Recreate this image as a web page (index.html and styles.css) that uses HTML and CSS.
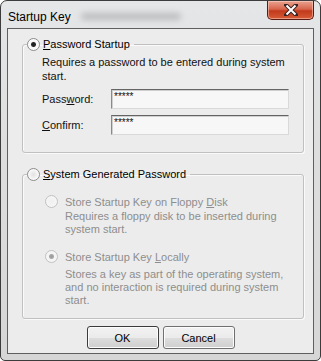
FILE: index.html
```html
<!DOCTYPE html>
<html lang="en">
<head>
    <meta charset="UTF-8">
    <title>Startup Key</title>
    <link rel="stylesheet" href="styles.css">
</head>
<body>
    <div class="window">
        <div class="titlebar">
            <span class="title">Startup Key</span>
            <span class="glass-blur"></span>
            <button class="close-btn" aria-label="Close">
                <svg width="14" height="12" viewBox="0 0 14 12">
                    <path d="M2 1 L12 11 M12 1 L2 11" stroke="#3b2222" stroke-width="4" stroke-linecap="square"/>
                    <path d="M2.5 1.5 L11.5 10.5 M11.5 1.5 L2.5 10.5" stroke="#fff" stroke-width="2"/>
                </svg>
            </button>
        </div>

        <div class="client">
            <fieldset class="group">
                <legend class="group-legend">
                    <span class="radio checked"></span>
                    <span><u>P</u>assword Startup</span>
                </legend>
                <p class="desc first">Requires a password to be entered during system start.</p>
                <div class="field-row">
                    <label class="field-label">Pass<u>w</u>ord:</label>
                    <div class="textbox">*****</div>
                </div>
                <div class="field-row">
                    <label class="field-label"><u>C</u>onfirm:</label>
                    <div class="textbox">*****</div>
                </div>
            </fieldset>

            <fieldset class="group second">
                <legend class="group-legend">
                    <span class="radio"></span>
                    <span><u>S</u>ystem Generated Password</span>
                </legend>
                <div class="option disabled">
                    <div class="option-row">
                        <span class="radio"></span>
                        <span>Store Startup Key on Floppy <u>D</u>isk</span>
                    </div>
                    <p class="desc sub">Requires a floppy disk to be inserted during system start.</p>
                </div>
                <div class="option disabled">
                    <div class="option-row">
                        <span class="radio checked"></span>
                        <span>Store Startup Key <u>L</u>ocally</span>
                    </div>
                    <p class="desc sub lower">Stores a key as part of the operating system, and no interaction is required during system start.</p>
                </div>
            </fieldset>

            <div class="buttons">
                <button class="btn default">OK</button>
                <button class="btn">Cancel</button>
            </div>
        </div>
    </div>
</body>
</html>
```

FILE: styles.css
```css
body {
    margin: 0;
    background: #fff;
    font-family: "Liberation Sans", Arial, sans-serif;
    font-size: 11px;
    color: #111;
}

.window {
    width: 321px;
    height: 361px;
    box-sizing: border-box;
    border: 1px solid #3c3c3c;
    border-radius: 7px 7px 5px 5px;
    background: linear-gradient(180deg, #e4e6e8 0%, #dedede 40%, #d6d6d6 100%);
    padding: 0 6px 6px 6px;
    display: flex;
    flex-direction: column;
}

.titlebar {
    height: 27px;
    display: flex;
    align-items: flex-start;
    margin-right: -1px;
}

.title {
    font-size: 12px;
    color: #000;
    margin-top: 9px;
    margin-left: 1px;
}

.glass-blur {
    width: 100px;
    height: 7px;
    margin: 12px 0 0 10px;
    background: #9a9a9a;
    border-radius: 3px;
    filter: blur(3px);
    opacity: 0.55;
}

.close-btn {
    margin-left: auto;
    margin-right: 1px;
    width: 47px;
    height: 19px;
    padding: 0;
    border: 1px solid #5a1b14;
    border-top: none;
    border-radius: 0 0 5px 5px;
    background: linear-gradient(180deg, #e8a391 0%, #d8664d 45%, #c13a1c 55%, #d75b36 100%);
    box-shadow: inset 0 0 0 1px rgba(255, 220, 210, 0.5);
    display: flex;
    align-items: center;
    justify-content: center;
}

.client {
    flex-grow: 1;
    border: 1px solid #5f5f5f;
    background: #ececec;
    display: flex;
    flex-direction: column;
}

.group {
    margin: 8px 9px 0 14px;
    padding: 0 4px 17px 4px;
    border: 1px solid #c0c0c0;
    border-radius: 3px;
    box-shadow: inset 1px 1px 0 #fafafa, 1px 1px 0 #fafafa;
    min-width: 0;
}

.group.second {
    margin-top: 14px;
    padding-bottom: 11px;
}

.group-legend {
    display: flex;
    align-items: center;
    gap: 3px;
    padding: 0 4px 0 0;
    height: 14px;
    line-height: 14px;
    color: #000;
}

.radio {
    width: 11px;
    height: 11px;
    border: 1px solid #8c8c8c;
    border-radius: 50%;
    background: radial-gradient(circle at 50% 50%, #e2e2e2 0, #f4f4f4 4px, #ffffff 6px);
    flex-shrink: 0;
}

.radio.checked {
    background: radial-gradient(circle at 50% 50%, #1c1c1c 0, #2a2a2a 2px, #f6f6f6 3px, #ffffff 6px);
}

.desc {
    margin: 0;
    line-height: 14px;
}

.desc.first {
    margin: 4px 0 0 15px;
    width: 250px;
}

.field-row {
    display: flex;
    align-items: center;
    margin: 6px 0 0 15px;
}

.field-row + .field-row {
    margin-top: 6px;
}

.field-label {
    width: 69px;
}

.textbox {
    width: 174px;
    height: 18px;
    border: 1px solid #d9d9d9;
    border-top-color: #646464;
    border-left-color: #8a8a8a;
    background: #f7f7f7;
    font-size: 10px;
    line-height: 13px;
    padding-left: 2px;
    box-sizing: content-box;
    box-shadow: inset 1px 1px 0 #cfcfcf;
}

.option {
    margin-left: 18px;
}

.option + .option {
    margin-top: 12px;
}

.option-row {
    display: flex;
    align-items: center;
    gap: 7px;
    margin-top: 13px;
    height: 15px;
}

.option.disabled {
    color: #8e8e8e;
}

.option.disabled .radio {
    border-color: #c2c2c2;
    background: radial-gradient(circle at 50% 50%, #f0f0f0 0, #f6f6f6 6px);
}

.option.disabled .radio.checked {
    background: radial-gradient(circle at 50% 50%, #9a9a9a 0, #a8a8a8 2px, #f4f4f4 3px, #f6f6f6 6px);
}

.desc.sub {
    margin-left: 20px;
    margin-top: 1px;
    width: 225px;
    line-height: 13px;
}

.desc.sub.lower {
    margin-top: 4px;
}

.buttons {
    display: flex;
    justify-content: center;
    gap: 4px;
    margin-top: 7px;
}

.btn {
    width: 72px;
    height: 23px;
    font-family: "Liberation Sans", Arial, sans-serif;
    font-size: 11px;
    color: #000;
    border: 1px solid #707070;
    border-radius: 3px;
    background: linear-gradient(180deg, #f2f2f2 0%, #ebebeb 50%, #dddddd 51%, #cfcfcf 100%);
    box-shadow: inset 0 0 0 1px #fcfcfc;
    padding: 0;
}

.btn.default {
    border-color: #3c3c3c;
}
```
